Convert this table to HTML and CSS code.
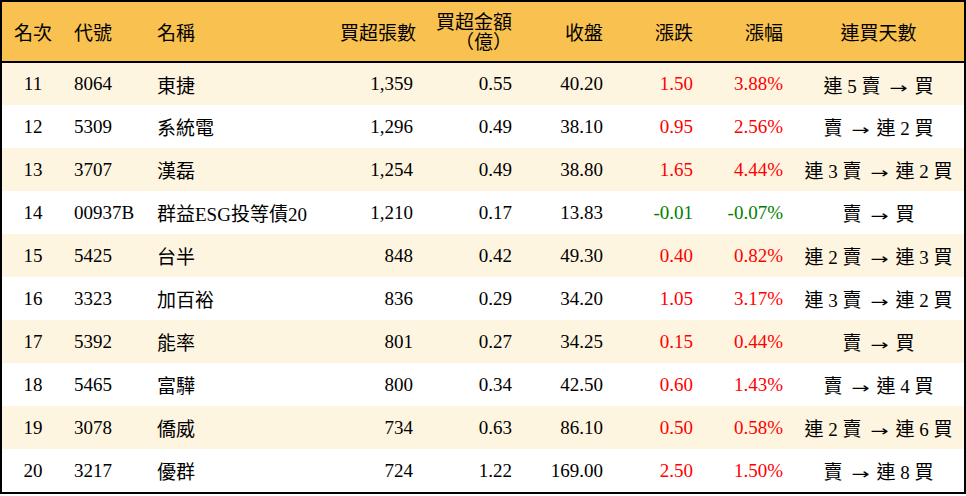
FILE: index.html
```html
<!DOCTYPE html>
<html lang="zh-Hant">
<head>
<meta charset="utf-8">
<title>買超排行</title>
<link rel="stylesheet" href="styles.css">
</head>
<body>
<div class="frame">
<table class="rank">
<colgroup>
<col class="c1"><col class="c2"><col class="c3"><col class="c4"><col class="c5"><col class="c6"><col class="c7"><col class="c8"><col class="c9">
</colgroup>
<thead>
<tr>
<th class="ctr">名次</th>
<th class="lft">代號</th>
<th class="lft">名稱</th>
<th class="rgt">買超張數</th>
<th class="rgt two">買超金額<br><span class="par po">（</span>億<span class="par pc">）</span></th>
<th class="rgt">收盤</th>
<th class="rgt">漲跌</th>
<th class="rgt">漲幅</th>
<th class="ctr">連買天數</th>
</tr>
</thead>
<tbody>
<tr class="alt"><td class="ctr">11</td><td class="lft">8064</td><td class="lft">東捷</td><td class="rgt">1,359</td><td class="rgt">0.55</td><td class="rgt">40.20</td><td class="rgt up">1.50</td><td class="rgt up">3.88%</td><td class="ctr">連 5 賣 <span class="arr">→</span> 買</td></tr>
<tr><td class="ctr">12</td><td class="lft">5309</td><td class="lft">系統電</td><td class="rgt">1,296</td><td class="rgt">0.49</td><td class="rgt">38.10</td><td class="rgt up">0.95</td><td class="rgt up">2.56%</td><td class="ctr">賣 <span class="arr">→</span> 連 2 買</td></tr>
<tr class="alt"><td class="ctr">13</td><td class="lft">3707</td><td class="lft">漢磊</td><td class="rgt">1,254</td><td class="rgt">0.49</td><td class="rgt">38.80</td><td class="rgt up">1.65</td><td class="rgt up">4.44%</td><td class="ctr">連 3 賣 <span class="arr">→</span> 連 2 買</td></tr>
<tr><td class="ctr">14</td><td class="lft">00937B</td><td class="lft">群益ESG投等債20</td><td class="rgt">1,210</td><td class="rgt">0.17</td><td class="rgt">13.83</td><td class="rgt down">-0.01</td><td class="rgt down">-0.07%</td><td class="ctr">賣 <span class="arr">→</span> 買</td></tr>
<tr class="alt"><td class="ctr">15</td><td class="lft">5425</td><td class="lft">台半</td><td class="rgt">848</td><td class="rgt">0.42</td><td class="rgt">49.30</td><td class="rgt up">0.40</td><td class="rgt up">0.82%</td><td class="ctr">連 2 賣 <span class="arr">→</span> 連 3 買</td></tr>
<tr><td class="ctr">16</td><td class="lft">3323</td><td class="lft">加百裕</td><td class="rgt">836</td><td class="rgt">0.29</td><td class="rgt">34.20</td><td class="rgt up">1.05</td><td class="rgt up">3.17%</td><td class="ctr">連 3 賣 <span class="arr">→</span> 連 2 買</td></tr>
<tr class="alt"><td class="ctr">17</td><td class="lft">5392</td><td class="lft">能率</td><td class="rgt">801</td><td class="rgt">0.27</td><td class="rgt">34.25</td><td class="rgt up">0.15</td><td class="rgt up">0.44%</td><td class="ctr">賣 <span class="arr">→</span> 買</td></tr>
<tr><td class="ctr">18</td><td class="lft">5465</td><td class="lft">富驊</td><td class="rgt">800</td><td class="rgt">0.34</td><td class="rgt">42.50</td><td class="rgt up">0.60</td><td class="rgt up">1.43%</td><td class="ctr">賣 <span class="arr">→</span> 連 4 買</td></tr>
<tr class="alt"><td class="ctr">19</td><td class="lft">3078</td><td class="lft">僑威</td><td class="rgt">734</td><td class="rgt">0.63</td><td class="rgt">86.10</td><td class="rgt up">0.50</td><td class="rgt up">0.58%</td><td class="ctr">連 2 賣 <span class="arr">→</span> 連 6 買</td></tr>
<tr><td class="ctr">20</td><td class="lft">3217</td><td class="lft">優群</td><td class="rgt">724</td><td class="rgt">1.22</td><td class="rgt">169.00</td><td class="rgt up">2.50</td><td class="rgt up">1.50%</td><td class="ctr">賣 <span class="arr">→</span> 連 8 買</td></tr>
</tbody>
</table>
</div>
</body>
</html>
```
FILE: styles.css
```css
html, body {
  margin: 0;
  padding: 0;
  background: #ffffff;
}
.frame {
  width: 962px;
  border: 2px solid #000000;
}
.rank {
  width: 962px;
  border-collapse: collapse;
  table-layout: fixed;
  font-family: "Liberation Serif", "Noto Sans CJK TC", serif;
  font-size: 19px;
  color: #000000;
}
.c1 { width: 62px; }
.c2 { width: 83px; }
.c3 { width: 183px; }
.c4 { width: 93px; }
.c5 { width: 99px; }
.c6 { width: 91px; }
.c7 { width: 90px; }
.c8 { width: 90px; }
.c9 { width: 171px; }
.rank thead tr {
  background: #f9c14f;
  height: 60px;
}
.rank th {
  font-weight: normal;
  border-bottom: 2px solid #000000;
  padding: 0 10px;
  vertical-align: middle;
  white-space: nowrap;
}
.rank th.two {
  line-height: 20px;
  padding-top: 2px;
}
.par {
  display: inline-block;
  text-align: center;
}
.po { width: 19px; }
.pc { width: 15px; margin-right: 4px; }
.arr {
  display: inline-block;
  font-family: "DejaVu Sans", sans-serif;
  font-size: 15px;
  transform: scaleX(1.45);
  margin: 0 5px 0 7px;
}
.rank tbody tr {
  height: 43px;
}
.rank tbody tr.alt {
  background: #fef5e0;
}
.rank td {
  padding: 0 10px;
  vertical-align: middle;
  white-space: nowrap;
}
.ctr { text-align: center; }
.lft { text-align: left; }
.rgt { text-align: right; }
.up { color: #ff0000; }
.down { color: #008000; }
```
